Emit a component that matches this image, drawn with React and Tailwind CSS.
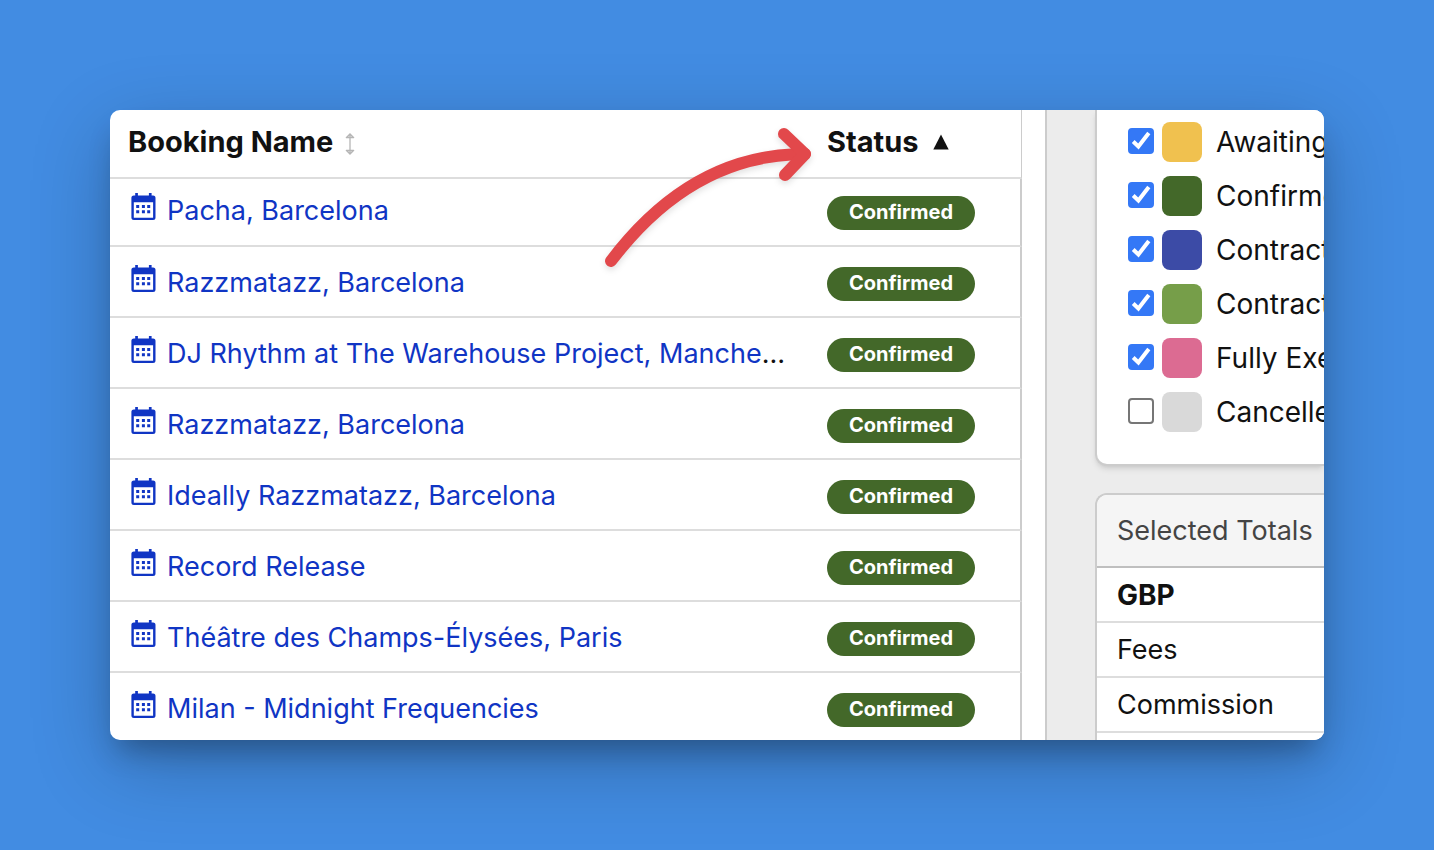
import React, { useState } from 'react';

const bookings = [
  { id: 1, name: 'Pacha, Barcelona', status: 'Confirmed' },
  { id: 2, name: 'Razzmatazz, Barcelona', status: 'Confirmed' },
  { id: 3, name: 'DJ Rhythm at The Warehouse Project, Manchester', status: 'Confirmed' },
  { id: 4, name: 'Razzmatazz, Barcelona', status: 'Confirmed' },
  { id: 5, name: 'Ideally Razzmatazz, Barcelona', status: 'Confirmed' },
  { id: 6, name: 'Record Release', status: 'Confirmed' },
  { id: 7, name: 'Théâtre des Champs-Élysées, Paris', status: 'Confirmed' },
  { id: 8, name: 'Milan - Midnight Frequencies', status: 'Confirmed' },
];

const statusFilters = [
  { id: 'awaiting', label: 'Awaiting', color: 'bg-[#f0c14f]', checked: true },
  { id: 'confirmed', label: 'Confirmed', color: 'bg-[#436829]', checked: true },
  { id: 'contract-sent', label: 'Contract Sent', color: 'bg-[#3c4ba6]', checked: true },
  { id: 'contract-signed', label: 'Contract Signed', color: 'bg-[#769e49]', checked: true },
  { id: 'executed', label: 'Fully Executed', color: 'bg-[#dc6b92]', checked: true },
  { id: 'cancelled', label: 'Cancelled', color: 'bg-[#d9d9d9]', checked: false },
];

function CalendarIcon() {
  return (
    <svg width="26" height="28" viewBox="0 0 26 28" className="shrink-0" fill="currentColor" aria-hidden="true">
      <path
        fillRule="evenodd"
        d="M4.2 0h2.7v2.400h11V0h2.700v2.400h1.400A2.500 2.500 0 0 1 24.500 5v19.500A2.500 2.500 0 0 1 22 27H2.900A2.500 2.500 0 0 1 .4 24.500V5A2.500 2.500 0 0 1 2.900 2.400h1.300zM2.800 9.300v15.400h19.300V9.300z"
      />
      <path d="M5.200 12h3v3h-3zM10.900 12h3v3h-3zM16.200 12h3v3h-3zM5.200 17.200h3v3h-3zM10.900 17.200h3v3h-3zM16.200 17.200h3v3h-3z" />
    </svg>
  );
}

function BookingsTable() {
  return (
    <table className="w-full table-fixed border-separate border-spacing-0 text-left">
      <thead>
        <tr className="h-[69px]">
          <th className="border-b-2 border-[#ddd] px-[18px] pb-1 text-[29px] leading-9 font-bold">
            <button type="button" className="flex items-center gap-3">
              Booking Name
              <svg width="10" height="22" viewBox="0 0 10 22" className="mt-1" fill="none" stroke="#b5b5b5" strokeWidth="1.300" aria-hidden="true">
                <path d="M5 2v18M2 4.500h6M2 17.500h6M1 5l4-4 4 4M1 17l4 4 4-4" />
              </svg>
            </button>
          </th>
          <th className="w-[213px] border-r border-b-2 border-r-[#ccc] border-b-[#ddd] px-[18px] pb-1 text-[29px] leading-9 font-bold">
            <button type="button" className="flex items-center gap-3.5">
              Status
              <svg width="16" height="16" viewBox="0 0 16 16" fill="currentColor" aria-hidden="true">
                <path d="M8 .500 15.700 15.500H.300z" />
              </svg>
            </button>
          </th>
        </tr>
      </thead>
      <tbody>
        {bookings.map((booking) => (
          <tr key={booking.id} className="group h-[71px] first:h-[68px]">
            <td className="truncate border-b-2 border-[#ddd] pt-0.5 pr-[18px] pl-[21px] text-[27px] leading-9 group-first:pb-1">
              <a href="#booking" className="text-[#1035c4]">
                <span className="mr-2.5 inline-block align-[-1px]">
                  <CalendarIcon />
                </span>
                {booking.name}
              </a>
            </td>
            <td className="border-r-2 border-b-2 border-r-[#ccc] border-b-[#ddd] px-[18px] pt-1 group-first:pt-0.5">
              <span className="flex h-[34px] w-[148px] justify-center rounded-full bg-[#436829] text-[20px] leading-8 font-bold text-white">
                {booking.status}
              </span>
            </td>
          </tr>
        ))}
      </tbody>
    </table>
  );
}

function StatusFilters() {
  const [selected, setSelected] = useState(
    statusFilters.filter((item) => item.checked).map((item) => item.id)
  );

  const toggle = (id) => {
    setSelected(selected.includes(id) ? selected.filter((item) => item !== id) : [...selected, id]);
  };

  return (
    <div className="flex flex-col gap-3.5 rounded-bl-xl border-b-2 border-l-2 border-[#ccc] bg-white pt-3 pb-8 pl-[31px] shadow-md">
      {statusFilters.map((item) => (
        <label key={item.id} className="flex h-10 items-center gap-2 text-[28px] leading-9 whitespace-nowrap">
          <span className="mb-0.5 grid shrink-0">
            <input
              type="checkbox"
              checked={selected.includes(item.id)}
              onChange={() => toggle(item.id)}
              className="peer col-start-1 row-start-1 size-[26px] appearance-none rounded border-2 border-[#767676] bg-white checked:border-[#3478f6] checked:bg-[#3478f6]"
            />
            <svg
              width="26"
              height="26"
              viewBox="0 0 26 26"
              className="pointer-events-none invisible col-start-1 row-start-1 peer-checked:visible"
              fill="none"
              stroke="white"
              strokeWidth="4"
              aria-hidden="true"
            >
              <path d="m5.200 13.500 5.200 5L20.800 5" />
            </svg>
          </span>
          <span className={`mr-1.5 size-10 shrink-0 rounded-lg ${item.color}`} />
          {item.label}
        </label>
      ))}
    </div>
  );
}

function SelectedTotals() {
  return (
    <div className="flex-1 rounded-tl-xl border-t-2 border-l-2 border-[#ccc] bg-white text-[27px] leading-9 whitespace-nowrap">
      <h2 className="flex h-[73px] items-center rounded-tl-[10px] border-b-2 border-[#bfbfbf] bg-[#f5f5f5] pl-5 text-[#444]">
        Selected Totals
      </h2>
      <table className="w-full border-separate border-spacing-0 text-left">
        <tbody>
          <tr className="h-[55px]">
            <th className="border-b-2 border-[#ddd] pl-5 text-[28px] font-bold">GBP</th>
          </tr>
          <tr className="h-[55px]">
            <td className="border-b-2 border-[#ddd] pl-5">Fees</td>
          </tr>
          <tr className="h-[55px]">
            <td className="border-b-2 border-[#ddd] pl-5">Commission</td>
          </tr>
        </tbody>
      </table>
    </div>
  );
}

export default function App() {
  return (
    <div className="h-screen overflow-hidden bg-[#428ce2] p-[110px] font-['Inter',sans-serif] text-[#111]">
      <div className="h-full rounded-[10px] shadow-[0_18px_28px_-8px_rgba(0,0,0,0.26),0_24px_80px_rgba(0,0,0,0.24)]">
        <div className="relative flex h-full overflow-hidden rounded-[10px] bg-white">
          <main className="min-w-0 flex-1 pr-[23px]">
            <BookingsTable />
          </main>
          <aside className="flex w-[279px] shrink-0 flex-col gap-[27px] overflow-hidden border-l-2 border-[#ccc] bg-[#ececec] pl-12">
            <StatusFilters />
            <SelectedTotals />
          </aside>

          {/* Arrow pointing at the sorted column */}
          <svg
            width="220"
            height="160"
            viewBox="600 120 220 160"
            className="pointer-events-none absolute top-2.5 right-[504px] drop-shadow-md"
            fill="none"
            stroke="#e2484b"
            strokeWidth="12"
            strokeLinecap="round"
            strokeLinejoin="round"
            aria-hidden="true"
          >
            <path d="M611 261Q692 154 805 154" />
            <path d="m784 134 21 20-20 21" />
          </svg>
        </div>
      </div>
    </div>
  );
}
